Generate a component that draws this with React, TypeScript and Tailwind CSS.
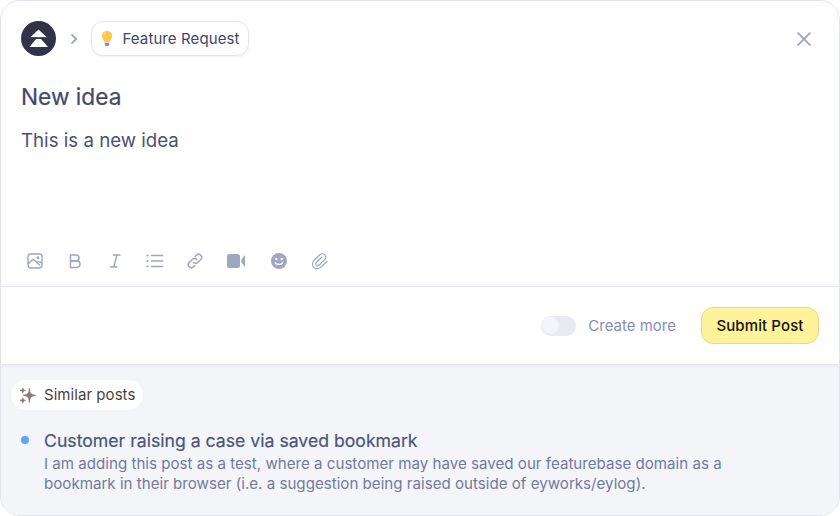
import React from "react";

const iconClass = "w-[18px] h-[18px] text-[#a0a5c2]";

function ImageIcon() {
  return (
    <svg viewBox="0 0 18 18" className={iconClass} fill="none" stroke="currentColor" strokeWidth="1.4">
      <rect x="2" y="2" width="14" height="14" rx="3" />
      <path d="M2.2 12 L6 8.2 C7 7.4 8 7.6 9 8.6 L14 13.6" />
      <path d="M10.5 11 L12 9.8 C12.7 9.3 13.6 9.4 16 11.5" />
      <circle cx="12" cy="5.8" r="0.8" />
    </svg>
  );
}
function BoldIcon() {
  return (
    <svg viewBox="0 0 18 18" className={iconClass} fill="none" stroke="currentColor" strokeWidth="1.5" strokeLinejoin="round">
      <path d="M4.5 3 H10 A3 3 0 0 1 10 9 H4.5 Z" />
      <path d="M4.5 9 H10.8 A3.2 3.2 0 0 1 10.8 15.4 H4.5 Z" />
    </svg>
  );
}
function ItalicIcon() {
  return (
    <svg viewBox="0 0 18 18" className={iconClass} fill="none" stroke="currentColor" strokeWidth="1.4" strokeLinecap="round">
      <path d="M7.5 3 H14 M4.5 15 H11 M10.8 3 L7.8 15" />
    </svg>
  );
}
function ListIcon() {
  return (
    <svg viewBox="0 0 18 18" className={iconClass} fill="none" stroke="currentColor" strokeWidth="1.4" strokeLinecap="round">
      <path d="M5.5 3.5 H16.5 M5.5 9 H16.5 M5.5 14.5 H16.5" />
      <path d="M1.2 3.5 H1.6 M1.2 9 H1.6 M1.2 14.5 H1.6" strokeWidth="1.8" />
    </svg>
  );
}
function LinkIcon() {
  return (
    <svg viewBox="0 0 18 18" className={iconClass} fill="none" stroke="currentColor" strokeWidth="1.5" strokeLinecap="round">
      <path d="M7.5 10.5 a3 3 0 0 0 4.3 0 l3 -3 a3 3 0 0 0 -4.3 -4.3 l-1.2 1.2" />
      <path d="M10.5 7.5 a3 3 0 0 0 -4.3 0 l-3 3 a3 3 0 0 0 4.3 4.3 l1.2 -1.2" />
    </svg>
  );
}
function VideoIcon() {
  return (
    <svg viewBox="0 0 18 18" className={iconClass} fill="currentColor">
      <rect x="0" y="2" width="13" height="14" rx="2.5" />
      <path d="M14.4 7.4 L18 3 V15 L14.4 10.6 Z" />
    </svg>
  );
}
function SmileIcon() {
  return (
    <svg viewBox="0 0 18 18" className={iconClass}>
      <circle cx="9" cy="9" r="8" fill="currentColor" />
      <circle cx="6.3" cy="7" r="1.2" fill="#fff" />
      <circle cx="11.7" cy="7" r="1.2" fill="#fff" />
      <path d="M5.3 10.8 C6.8 13 11.2 13 12.7 10.8" fill="none" stroke="#fff" strokeWidth="1.3" strokeLinecap="round" />
    </svg>
  );
}
function ClipIcon() {
  return (
    <svg viewBox="0 0 18 18" className={iconClass} fill="none" stroke="currentColor" strokeWidth="1.2" strokeLinecap="round" strokeLinejoin="round">
      <path d="M16 9.5 L9.6 15.4 C7.5 17.3 4.3 17.1 2.6 15.2 C0.9 13.2 1.2 10.3 3 8.5 L8.8 2.8 C10.2 1.4 12.5 1.4 13.8 2.8 C15.1 4.2 15 6.3 13.6 7.7 L7.9 13.2 C7.1 14 5.9 14 5.2 13.2 C4.5 12.4 4.6 11.3 5.3 10.5 L10.7 5.3" />
    </svg>
  );
}

export default function App() {
  return (
    <div className="w-[840px] h-[516px] bg-white font-['Inter',sans-serif]">
      <div className="w-full h-full border border-[#e3e4ec] rounded-[20px] overflow-hidden flex flex-col bg-white">
        <div className="h-[285px] flex flex-col pl-5 pr-[28px] pt-5 shrink-0">
          <div className="flex items-center h-[35px]">
            <svg viewBox="0 0 35 35" className="w-[35px] h-[35px] shrink-0">
              <circle cx="17.5" cy="17.5" r="17.5" fill="#34324b" />
              <path d="M17.5 8.5 L26 16.5 H9 Z" fill="#fff" />
              <path d="M17.5 15 L27 26 H8.5 Z" fill="#fff" />
              <path d="M8 16.2 H27 V18 H8 Z" fill="#34324b" />
            </svg>
            <svg viewBox="0 0 12 12" className="w-3 h-3 ml-3 text-[#9ea3bf]" fill="none" stroke="currentColor" strokeWidth="1.8" strokeLinecap="round" strokeLinejoin="round">
              <path d="M4 1.8 L8.2 6 L4 10.2" />
            </svg>
            <div className="ml-[11px] h-[35px] flex items-center rounded-xl border border-[#e4e5ef] bg-white pl-2 pr-2 shadow-[0_1px_2px_rgba(30,30,60,0.06)]">
              <svg viewBox="0 0 14 18" className="w-[14px] h-[17px] shrink-0">
                <path d="M7 1 C3.6 1 1.5 3.4 1.5 6.2 C1.5 8.8 3.5 10 4.2 13 H9.8 C10.5 10 12.5 8.8 12.5 6.2 C12.5 3.4 10.4 1 7 1 Z" fill="#fcc84a" />
                <path d="M7 2.5 C5 2.5 3.4 3.8 3.2 6 C4.4 4.4 5.6 3.6 7 2.5 Z" fill="#fee9a6" />
                <path d="M4.6 13.5 H9.4 V15.4 C9.4 16.6 8.2 17.2 7 17.2 C5.8 17.2 4.6 16.6 4.6 15.4 Z" fill="#9a86b0" />
              </svg>
              <span className="ml-[8.5px] text-[15px] leading-5 text-[#40456a] tracking-[0.1px] whitespace-nowrap">Feature Request</span>
            </div>
            <div className="ml-auto">
              <svg viewBox="0 0 14 14" className="w-[14px] h-[14px] text-[#9ea3bf]" fill="none" stroke="currentColor" strokeWidth="1.8" strokeLinecap="round">
                <path d="M1.2 1.2 L12.8 12.8 M12.8 1.2 L1.2 12.8" />
              </svg>
            </div>
          </div>
          <h1 className="mt-[26px] text-[22.7px] leading-[30px] font-normal [-webkit-text-stroke:0.2px_#43496b] text-[#43496b]">New idea</h1>
          <p className="mt-[15px] text-[18.7px] leading-7 text-[#4c5270]">This is a new idea</p>
          <div className="mt-auto mb-4 ml-[5px] flex items-center gap-[22px] h-[18px]">
            <ImageIcon />
            <BoldIcon />
            <ItalicIcon />
            <ListIcon />
            <LinkIcon />
            <span className="ml-[1px]"><VideoIcon /></span>
            <span className="ml-[3px]"><SmileIcon /></span>
            <span className="ml-[1px]"><ClipIcon /></span>
          </div>
        </div>
        <div className="h-[78px] shrink-0 border-t border-[#e5e6ee] flex items-center justify-end pr-5 shadow-[0_1px_3px_rgba(30,30,60,0.1)] relative">
          <div className="w-[35px] h-5 rounded-full bg-[#e8e9f1] flex items-center pl-[1px]">
            <div className="w-[17px] h-[17px] rounded-full bg-[#f4f5fb]" />
          </div>
          <span className="ml-[12px] pt-[2px] text-[15px] text-[#878eb4]">Create more</span>
          <button className="ml-[25px] w-[118px] h-[37px] pt-[1px] rounded-xl bg-[#fef29a] border border-[#e6da85] text-[15px] tracking-[0.1px] font-medium text-[#15120a]">Submit Post</button>
        </div>
        <div className="flex-1 bg-[#f3f5f9] pl-[10px] pt-[16px]">
          <div className="inline-flex items-center h-[30px] rounded-[15px] bg-white pl-2 pr-2 text-[15px] tracking-[0.05px] text-[#4a3f3c]">
            <svg viewBox="0 0 18 18" className="w-[17px] h-[17px] text-[#85797a]" fill="currentColor">
              <path d="M11 1.5 C11.6 6.8 12.2 7.6 17.5 8.8 C12.2 10 11.6 10.8 11 16.5 C10.4 10.8 9.8 10 4.5 8.8 C9.8 7.6 10.4 6.8 11 1.5 Z" stroke="currentColor" strokeWidth="0.8" strokeLinejoin="round" />
              <path d="M4 1 C4.5 2.8 5 3.3 7 3.7 C5 4.1 4.5 4.6 4 6.5 C3.5 4.6 3 4.1 1 3.7 C3 3.3 3.5 2.8 4 1 Z" stroke="currentColor" strokeWidth="0.6" strokeLinejoin="round" />
              <path d="M4 11.5 C4.5 13.3 5 13.8 7 14.2 C5 14.6 4.5 15.1 4 17 C3.5 15.1 3 14.6 1 14.2 C3 13.8 3.5 13.3 4 11.5 Z" stroke="currentColor" strokeWidth="0.6" strokeLinejoin="round" />
            </svg>
            <span className="ml-2">Similar posts</span>
          </div>
          <div className="mt-[20px] flex">
            <div className="w-2 h-2 rounded-full bg-[#60a5fa] ml-[10px] mt-[6px] shrink-0" />
            <div className="ml-[15px]">
              <div className="text-[17.65px] leading-[22px] font-normal [-webkit-text-stroke:0.2px_#4c5478] text-[#4c5478]">Customer raising a case via saved bookmark</div>
              <p className="mt-[2px] w-[700px] text-[15.13px] leading-5 text-[#737a9b]">I am adding this post as a test, where a customer may have saved our featurebase domain as a bookmark in their browser (i.e. a suggestion being raised outside of eyworks/eylog).</p>
            </div>
          </div>
        </div>
      </div>
    </div>
  );
}
